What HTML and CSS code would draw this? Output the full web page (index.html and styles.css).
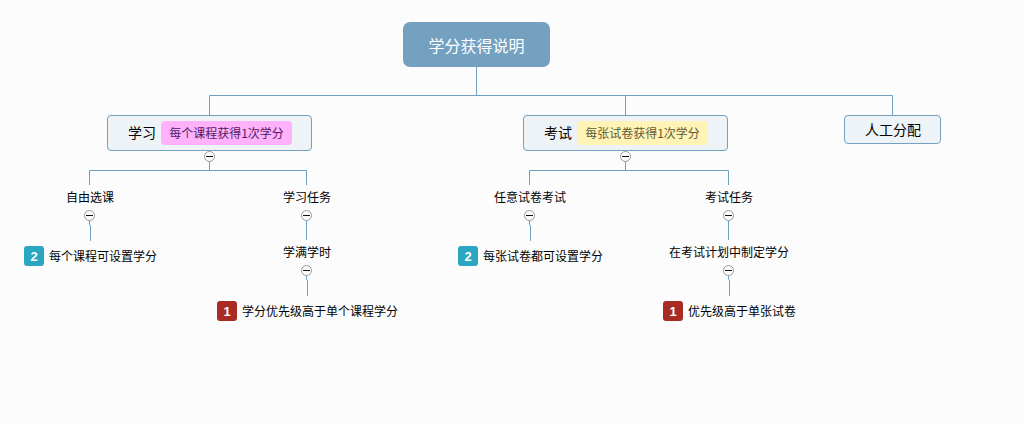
FILE: index.html
```html
<!DOCTYPE html>
<html lang="zh-CN">
<head>
<meta charset="utf-8">
<title>学分获得说明</title>
<link rel="stylesheet" href="styles.css">
</head>
<body>
<main class="canvas">
  <svg class="links" width="1024" height="424" viewBox="0 0 1024 424">
    <path d="M476.5 67V95.5M209.5 115V95.5H892.5V115M625.5 95.5V115"/>
    <path d="M209.5 161V170.5M89.5 185V170.5H306.5V185"/>
    <path d="M625.5 161V170.5M529.5 185V170.5H728.5V185"/>
    <path d="M89.5 220V224L90.5 226V241"/>
    <path d="M306.5 220V240"/>
    <path d="M306.5 275V279L307.5 281V296"/>
    <path d="M529.5 220V224L530.5 226V241"/>
    <path d="M728.5 220V240"/>
    <path d="M728.5 275V279L729.5 281V296"/>
  </svg>

  <div class="node root">学分获得说明</div>

  <div class="node branch branch-study"><span class="label">学习</span><span class="tag tag-pink">每个课程获得1次学分</span></div>
  <div class="node branch branch-exam"><span class="label">考试</span><span class="tag tag-yellow">每张试卷获得1次学分</span></div>
  <div class="node branch branch-manual"><span class="label">人工分配</span></div>

  <button class="fold fold-study"></button>
  <button class="fold fold-exam"></button>

  <div class="leaf l-free">自由选课</div>
  <button class="fold fold-free"></button>
  <div class="leaf with-badge l-course"><b class="badge teal">2</b>每个课程可设置学分</div>

  <div class="leaf l-task">学习任务</div>
  <button class="fold fold-task"></button>
  <div class="leaf l-hours">学满学时</div>
  <button class="fold fold-hours"></button>
  <div class="leaf with-badge l-priority"><b class="badge red">1</b>学分优先级高于单个课程学分</div>

  <div class="leaf l-any">任意试卷考试</div>
  <button class="fold fold-any"></button>
  <div class="leaf with-badge l-paper"><b class="badge teal">2</b>每张试卷都可设置学分</div>

  <div class="leaf l-examtask">考试任务</div>
  <button class="fold fold-examtask"></button>
  <div class="leaf l-plan">在考试计划中制定学分</div>
  <button class="fold fold-plan"></button>
  <div class="leaf with-badge l-single"><b class="badge red">1</b>优先级高于单张试卷</div>
</main>
</body>
</html>
```

FILE: styles.css
```css
* { box-sizing: border-box; }
html, body { margin: 0; padding: 0; background: #fcfcfc; overflow: hidden; }
.canvas {
  position: relative;
  width: 1024px;
  height: 424px;
  background: #fcfcfc;
  font-family: "Noto Sans CJK SC", "Noto Sans", sans-serif;
  color: #000;
}
.links { position: absolute; left: 0; top: 0; }
.links path { fill: none; stroke: #6f9fbe; stroke-width: 1; }

.node { position: absolute; display: flex; align-items: center; justify-content: center; }
.root {
  left: 403px; top: 22px; width: 147px; height: 45px;
  background: #73a1bf; border-radius: 7px;
  color: #fff; font-size: 16px;
}
.branch {
  top: 115px; height: 36px; padding-left: 1px;
  background: #eef3f7; border: 1px solid #73a1bf; border-radius: 4px;
  font-size: 14px; gap: 5px; line-height: 20px;
}
.branch-study { left: 107px; width: 205px; }
.branch-exam { left: 523px; width: 205px; }
.branch-manual { left: 844px; width: 97px; height: 29px; }
.label { position: relative; top: -1px; }

.tag {
  display: flex; align-items: center; justify-content: center;
  width: 131px; height: 24px; border-radius: 4px; font-size: 12px;
}
.tag-pink { background: #ffb1fb; color: #4d1a66; }
.tag-yellow { background: #fff3b5; color: #5c5a35; }

.fold {
  position: absolute; width: 11px; height: 11px; padding: 0;
  border: 1px solid #9a9a9a; border-radius: 50%; background: #fcfcfc;
}
.fold::after {
  content: ""; position: absolute; left: 1px; top: 4px; width: 7px; height: 1px; background: #111;
}
.fold-study { left: 204px; top: 151px; }
.fold-exam { left: 620px; top: 151px; }
.fold-free { left: 84px; top: 210px; }
.fold-task { left: 301px; top: 210px; }
.fold-hours { left: 301px; top: 265px; }
.fold-any { left: 524px; top: 210px; }
.fold-examtask { left: 723px; top: 210px; }
.fold-plan { left: 723px; top: 265px; }

.leaf {
  position: absolute; font-size: 12px; line-height: 20px; height: 20px; white-space: nowrap;
}
.with-badge { display: flex; align-items: center; gap: 5px; }
.badge {
  display: flex; align-items: center; justify-content: center;
  width: 20px; height: 20px; border-radius: 3px;
  color: #fff; font: bold 13px "Liberation Sans", sans-serif;
}
.teal { background: #2aa6c1; }
.red { background: #a82c23; }

.l-free { left: 66px; top: 187px; }
.l-task { left: 283px; top: 187px; }
.l-hours { left: 283px; top: 242px; }
.l-any { left: 494px; top: 187px; }
.l-examtask { left: 705px; top: 187px; }
.l-plan { left: 669px; top: 242px; }
.l-course { left: 24px; top: 246px; }
.l-priority { left: 217px; top: 301px; }
.l-paper { left: 458px; top: 246px; }
.l-single { left: 663px; top: 301px; }
```
